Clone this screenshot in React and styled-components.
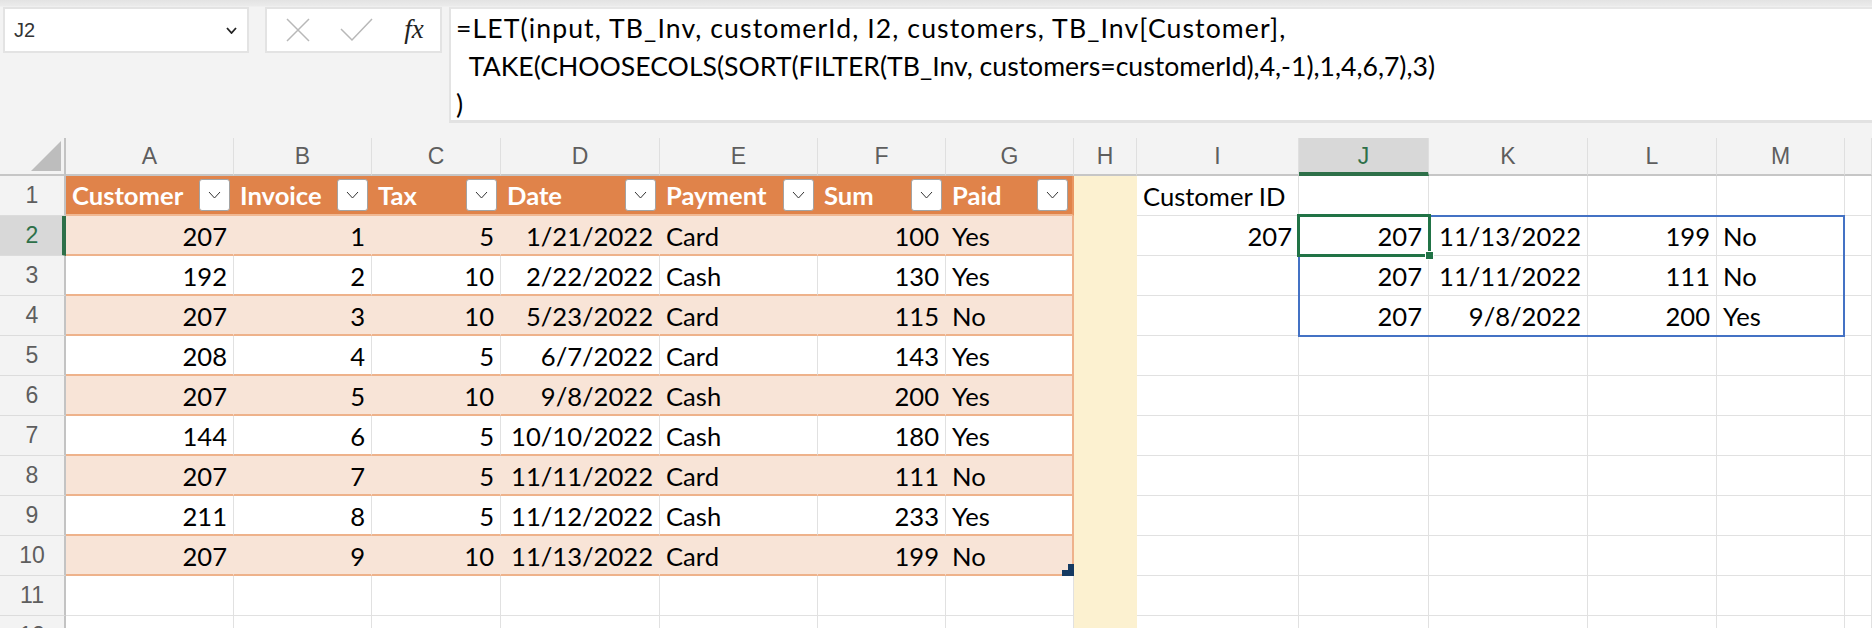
import React from "react";
import styled, { createGlobalStyle, css } from "styled-components";

const GlobalStyle = createGlobalStyle`
  html, body { margin: 0; padding: 0; background: #fff; }
  body { width: 1872px; height: 628px; overflow: hidden; font-family: Lato, "Liberation Sans", sans-serif; }
  #root { width: 1872px; height: 628px; }
`;

const COLS = [168, 138, 129, 159, 158, 128, 128, 63, 162, 130, 159, 129, 128];
const LETTERS = "ABCDEFGHIJKLM".split("");
const CELL_FONT = `Lato, "Liberation Sans", sans-serif`;
const ORANGE_LINE = "#eeb28b";

const DATA = [
  [207, 1, 5, "1/21/2022", "Card", 100, "Yes"],
  [192, 2, 10, "2/22/2022", "Cash", 130, "Yes"],
  [207, 3, 10, "5/23/2022", "Card", 115, "No"],
  [208, 4, 5, "6/7/2022", "Card", 143, "Yes"],
  [207, 5, 10, "9/8/2022", "Cash", 200, "Yes"],
  [144, 6, 5, "10/10/2022", "Cash", 180, "Yes"],
  [207, 7, 5, "11/11/2022", "Card", 111, "No"],
  [211, 8, 5, "11/12/2022", "Cash", 233, "Yes"],
  [207, 9, 10, "11/13/2022", "Card", 199, "No"],
];
const HEADERS = ["Customer", "Invoice", "Tax", "Date", "Payment", "Sum", "Paid"];
const RESULT = [
  [207, "11/13/2022", 199, "No"],
  [207, "11/11/2022", 111, "No"],
  [207, "9/8/2022", 200, "Yes"],
];

const FORMULA_LINES = [
  { text: "=LET(input, TB_Inv, customerId, I2, customers, TB_Inv[Customer],", spacing: 1.1 },
  { text: "  TAKE(CHOOSECOLS(SORT(FILTER(TB_Inv, customers=customerId),4,-1),1,4,6,7),3)", spacing: 0 },
  { text: ")", spacing: 0 },
];

/* every grid child is placed explicitly, so that overlays can share grid areas */
const place = (p) => css`
  grid-row: ${p.$row};
  grid-column: ${p.$col};
`;

const Page = styled.div`
  display: flex;
  flex-direction: column;
  width: 1872px;
  height: 628px;
  overflow: hidden;
  background: #f3f3f3;
`;

/* ---------- formula bar ---------- */
const TopBar = styled.div`
  display: flex;
  align-items: flex-start;
  height: 138px;
  flex: none;
  box-sizing: border-box;
  padding: 7px 0 0 3px;
  background: linear-gradient(#e3e3e3 0px, #ebebeb 6px, #f3f3f3 7px);
`;

const NameBox = styled.div`
  box-sizing: border-box;
  width: 246px;
  height: 46px;
  display: flex;
  align-items: center;
  justify-content: space-between;
  padding: 0 10px 0 9px;
  background: #fff;
  border: 2px solid #e3e3e3;
  font-family: "Liberation Sans", Arial, sans-serif;
  font-size: 20px;
  color: #333;
`;

const FnBox = styled.div`
  box-sizing: border-box;
  width: 177px;
  height: 46px;
  margin-left: 16px;
  display: flex;
  align-items: center;
  padding: 0 0 0 16px;
  background: #fff;
  border: 2px solid #e3e3e3;
`;

const FnSlot = styled.div`
  width: ${(p) => p.$w}px;
  display: flex;
  justify-content: center;
  align-items: center;
`;

const Fx = styled.span`
  font-family: "Liberation Serif", "Times New Roman", serif;
  font-style: italic;
  font-size: 27px;
  color: #222;
  line-height: 1;
  margin-top: -2px;
`;

const FormulaBox = styled.div`
  flex: 1;
  box-sizing: border-box;
  height: 116px;
  margin-left: 7px;
  padding: 0 0 0 5px;
  background: #fff;
  border-top: 2px solid #e6e6e6;
  border-left: 2px solid #e3e3e3;
  border-bottom: 3px solid #e2e2e2;
  font-family: ${CELL_FONT};
  font-size: 26.6px;
  line-height: 38px;
  color: #000;
`;

const FormulaLine = styled.div`
  white-space: pre;
  letter-spacing: ${(p) => p.$spacing}px;
`;

/* ---------- sheet ---------- */
const Sheet = styled.div`
  display: grid;
  grid-template-columns: 66px ${COLS.map((c) => c + "px").join(" ")} 1fr;
  grid-template-rows: 38px repeat(12, 40px);
  background: #fff;
`;

const Corner = styled.div`
  ${place}
  box-sizing: border-box;
  background: #f3f3f3;
  border-right: 2px solid #c3c3c3;
  border-bottom: 2px solid #c6c6c6;
  display: flex;
  align-items: flex-end;
  justify-content: flex-end;
  padding: 0 3px 3px 0;
`;

const ColHead = styled.div`
  ${place}
  box-sizing: border-box;
  display: flex;
  align-items: center;
  justify-content: center;
  background: ${(p) => (p.$sel ? "#d8d8d8" : "#f3f3f3")};
  border-right: 1px solid #dfdfdf;
  border-bottom: ${(p) => (p.$sel ? "4px solid #2e7049" : "2px solid #c6c6c6")};
  font-family: "Liberation Sans", Arial, sans-serif;
  font-size: 23px;
  color: ${(p) => (p.$sel ? "#2e7049" : "#5e5e5e")};
  padding-top: ${(p) => (p.$sel ? "2px" : "0")};
`;

const RowHead = styled.div`
  ${place}
  box-sizing: border-box;
  display: flex;
  align-items: center;
  justify-content: center;
  background: ${(p) => (p.$sel ? "#d8d8d8" : "#f3f3f3")};
  border-right: ${(p) => (p.$sel ? "4px solid #2e7049" : "2px solid #c3c3c3")};
  border-bottom: 1px solid #dcdcdc;
  font-family: "Liberation Sans", Arial, sans-serif;
  font-size: 23px;
  color: ${(p) => (p.$sel ? "#2e7049" : "#5e5e5e")};
  padding-left: ${(p) => (p.$sel ? "2px" : "0")};
`;

const Cell = styled.div`
  ${place}
  position: relative;
  box-sizing: border-box;
  min-width: 0;
  display: flex;
  align-items: center;
  justify-content: ${(p) => (p.$right ? "flex-end" : "flex-start")};
  padding: 1px 6px 0 6px;
  font-family: ${CELL_FONT};
  font-size: 25.6px;
  color: #000;
  white-space: nowrap;
  background: #fff;
  border-right: 1px solid #e1e1e1;
  border-bottom: 1px solid #e1e1e1;
  ${(p) =>
    p.$band &&
    css`
      background: #f8e4d7;
      border-right-color: #f8e4d7;
    `}
  ${(p) =>
    p.$table &&
    css`
      border-bottom: 2px solid ${ORANGE_LINE};
    `}
  ${(p) =>
    p.$edge &&
    css`
      border-right: 2px solid ${ORANGE_LINE};
    `}
  ${(p) =>
    p.$yellow &&
    css`
      background: #fcf1d0;
      border-color: #fcf1d0;
    `}
`;

const HeadCell = styled.div`
  ${place}
  box-sizing: border-box;
  min-width: 0;
  display: flex;
  align-items: center;
  justify-content: space-between;
  padding: 0 4px 0 6px;
  background: #e0834a;
  border-bottom: 2px solid #f0b893;
  border-right: ${(p) => (p.$edge ? `2px solid #e99762` : "none")};
  font-family: ${CELL_FONT};
  font-weight: 700;
  font-size: 25.6px;
  color: #fff;
  white-space: nowrap;
`;

const FilterBtn = styled.div`
  box-sizing: border-box;
  width: 31px;
  height: 32px;
  flex: none;
  display: flex;
  align-items: center;
  justify-content: center;
  background: #fff;
  border: 1px solid #a3a3a3;
  border-radius: 3px;
`;

const ResizeHandle = styled.span`
  position: absolute;
  right: -2px;
  bottom: -2px;
  width: 6px;
  height: 12px;
  background: #153a62;
  &::before {
    content: "";
    position: absolute;
    left: -6px;
    bottom: 0;
    width: 6px;
    height: 6px;
    background: #153a62;
  }
`;

const RangeBorder = styled.div`
  grid-column: 11 / 15;
  grid-row: 3 / 6;
  margin: -1px 0 -1px -1px;
  border: 2px solid #4472c4;
  pointer-events: none;
  z-index: 2;
`;

const Selection = styled.div`
  position: relative;
  grid-column: 11 / 12;
  grid-row: 3 / 4;
  margin: -2px -2px -1px -2px;
  border: 3px solid #217346;
  pointer-events: none;
  z-index: 3;
`;

const FillHandle = styled.span`
  position: absolute;
  right: -6px;
  bottom: -6px;
  width: 7px;
  height: 7px;
  background: #217346;
  border: 1px solid #fff;
`;

const Chevron = ({ w = 11, h = 6, sw = 1, color = "#333" }) => (
  <svg width={w + 2} height={h + 2} viewBox={`0 0 ${w + 2} ${h + 2}`}>
    <polyline points={`1,1 ${(w + 2) / 2},${h + 1} ${w + 1},1`} fill="none" stroke={color} strokeWidth={sw} />
  </svg>
);

const Triangle = () => (
  <svg width="30" height="30" viewBox="0 0 30 30">
    <polygon points="30,0 30,30 0,30" fill="#bdbdbd" />
  </svg>
);

export default function App() {
  const cells = [];

  cells.push(
    <Corner key="corner" $row={1} $col={1}>
      <Triangle />
    </Corner>
  );
  LETTERS.forEach((l, i) =>
    cells.push(
      <ColHead key={"h" + l} $row={1} $col={i + 2} $sel={l === "J"}>
        {l}
      </ColHead>
    )
  );
  cells.push(<ColHead key="hN" $row={1} $col={15} />);

  for (let r = 1; r <= 12; r++) {
    const gr = r + 1;
    cells.push(
      <RowHead key={"r" + r} $row={gr} $col={1} $sel={r === 2}>
        {r}
      </RowHead>
    );
    for (let c = 0; c < 14; c++) {
      const key = r + "-" + c;
      const gc = c + 2;
      const inTable = c < 7 && r <= 10;
      if (r === 1 && c < 7) {
        cells.push(
          <HeadCell key={key} $row={gr} $col={gc} $edge={c === 6}>
            <span>{HEADERS[c]}</span>
            <FilterBtn>
              <Chevron />
            </FilterBtn>
          </HeadCell>
        );
        continue;
      }
      if (inTable) {
        const v = DATA[r - 2][c];
        const band = r % 2 === 0;
        cells.push(
          <Cell
            key={key}
            $row={gr}
            $col={gc}
            $table
            $band={band}
            $edge={c === 6}
            $right={typeof v === "number" || c === 3}
          >
            {v}
            {r === 10 && c === 6 && <ResizeHandle />}
          </Cell>
        );
        continue;
      }
      if (c === 7) {
        cells.push(<Cell key={key} $row={gr} $col={gc} $yellow />);
        continue;
      }
      let content = null;
      let right = false;
      if (c === 8 && r === 1) content = "Customer ID";
      if (c === 8 && r === 2) {
        content = 207;
        right = true;
      }
      if (c >= 9 && c <= 12 && r >= 2 && r <= 4) {
        content = RESULT[r - 2][c - 9];
        right = c !== 12;
      }
      cells.push(
        <Cell key={key} $row={gr} $col={gc} $right={right}>
          {content}
        </Cell>
      );
    }
  }

  return (
    <>
      <GlobalStyle />
      <Page>
        <TopBar>
          <NameBox>
            <span>J2</span>
            <Chevron w={9} h={5} sw={1.8} color="#222" />
          </NameBox>
          <FnBox>
            <FnSlot $w={30}>
              <svg width="26" height="26" viewBox="0 0 26 26">
                <path d="M2 2 L24 24 M24 2 L2 24" stroke="#b8b8b8" strokeWidth="1.5" fill="none" />
              </svg>
            </FnSlot>
            <FnSlot $w={86}>
              <svg width="33" height="24" viewBox="0 0 33 24">
                <polyline points="1,11 12,22 32,1" stroke="#b8b8b8" strokeWidth="1.5" fill="none" />
              </svg>
            </FnSlot>
            <FnSlot $w={30}>
              <Fx>fx</Fx>
            </FnSlot>
          </FnBox>
          <FormulaBox>
            {FORMULA_LINES.map((l, i) => (
              <FormulaLine key={i} $spacing={l.spacing}>
                {l.text}
              </FormulaLine>
            ))}
          </FormulaBox>
        </TopBar>
        <Sheet>
          {cells}
          <RangeBorder />
          <Selection>
            <FillHandle />
          </Selection>
        </Sheet>
      </Page>
    </>
  );
}
